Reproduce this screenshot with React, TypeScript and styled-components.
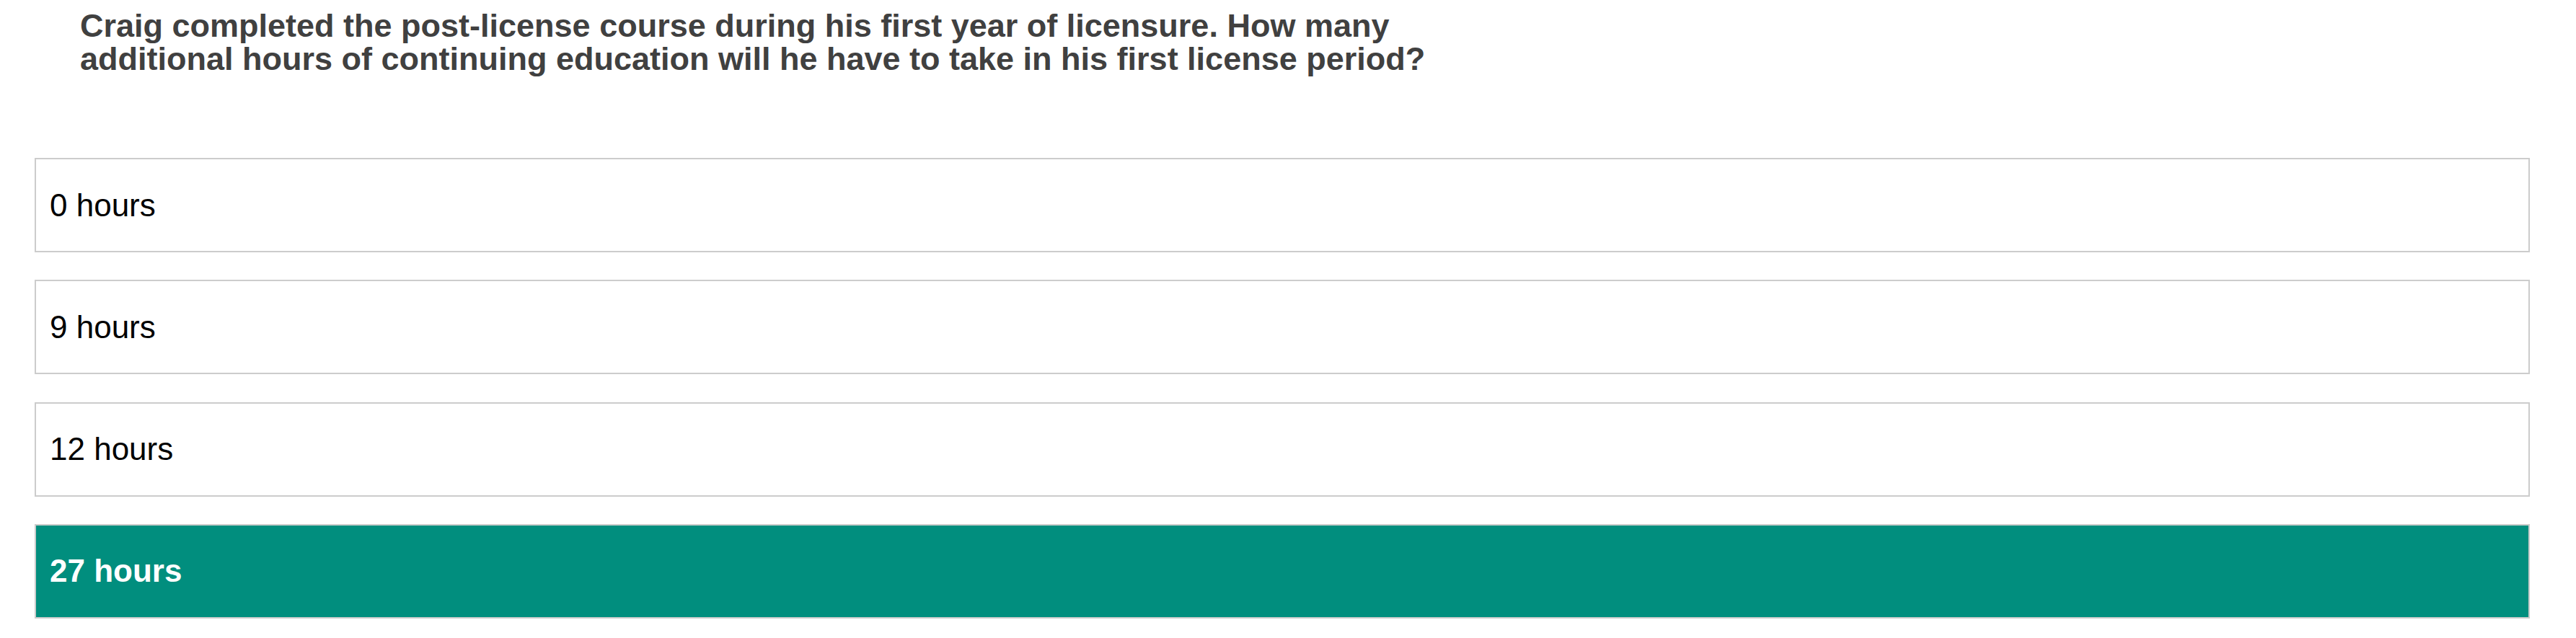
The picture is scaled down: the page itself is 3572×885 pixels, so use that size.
import styled, { createGlobalStyle } from 'styled-components';

const GlobalStyle = createGlobalStyle`
  html, body {
    margin: 0;
    padding: 0;
    background: #ffffff;
    font-family: "Liberation Sans", Arial, sans-serif;
  }
`;

const Page = styled.div`
  padding: 13px 64px 0 48px;
  display: flex;
  flex-direction: column;
`;

const Question = styled.p`
  margin: 0 0 114px 0;
  padding-left: 63px;
  max-width: 1950px;
  font-size: 45px;
  line-height: 46px;
  font-weight: 700;
  color: #404040;
`;

const OptionList = styled.div`
  display: flex;
  flex-direction: column;
  gap: 38.3px;
`;

const Option = styled.div<{ $selected?: boolean }>`
  display: flex;
  align-items: center;
  box-sizing: border-box;
  height: 131px;
  padding: 0 19px;
  border: 2px solid #cccccc;
  background: ${(props) => (props.$selected ? '#018e7e' : '#ffffff')};
  color: ${(props) => (props.$selected ? '#ffffff' : '#000000')};
  font-size: 44px;
  font-weight: ${(props) => (props.$selected ? 700 : 400)};
`;

const options = ['0 hours', '9 hours', '12 hours', '27 hours'];

export default function App() {
  const selected = '27 hours';

  return (
    <>
      <GlobalStyle />
      <Page>
        <Question>
          Craig completed the post-license course during his first year of licensure. How many
          additional hours of continuing education will he have to take in his first license period?
        </Question>
        <OptionList>
          {options.map((option) => (
            <Option key={option} $selected={option === selected}>
              {option}
            </Option>
          ))}
        </OptionList>
      </Page>
    </>
  );
}
